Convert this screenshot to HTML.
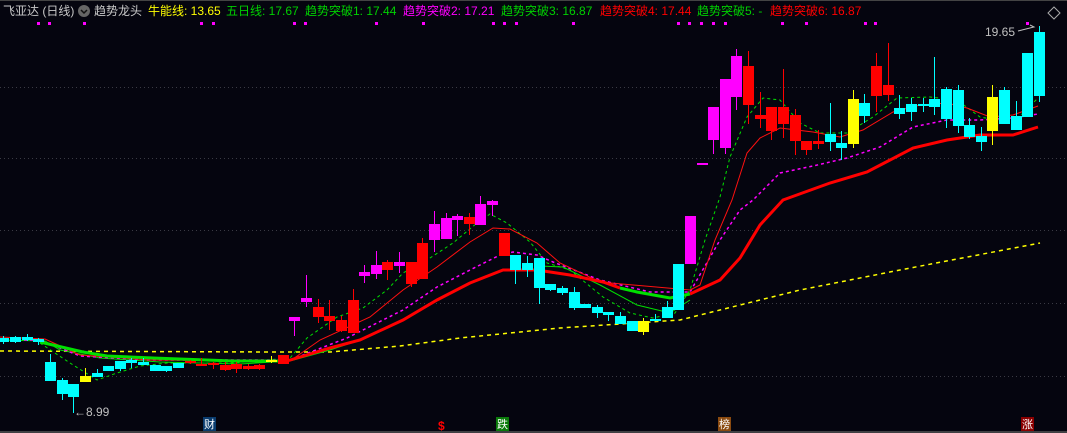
<!DOCTYPE html>
<html><head><meta charset="utf-8">
<style>
html,body{margin:0;padding:0;background:#05050f;}
#w{position:relative;width:1067px;height:433px;overflow:hidden;background:#05050f;font-family:"Liberation Sans","Noto Sans CJK SC",sans-serif;}
.h{position:absolute;top:3px;font-size:12px;white-space:nowrap;line-height:16px}
.ic{position:absolute;top:417px;width:13px;height:14px;font-size:11px;line-height:14px;text-align:center;color:#fff;font-family:"Noto Sans CJK SC",sans-serif}
</style></head><body>
<div id="w">
<svg id="s" width="1067" height="433" style="position:absolute;left:0;top:0">
<g stroke="#3a3a44" stroke-width="1" stroke-dasharray="1,3">
<line x1="0" y1="87.5" x2="1067" y2="87.5"/><line x1="0" y1="158.5" x2="1067" y2="158.5"/>
<line x1="0" y1="230.5" x2="1067" y2="230.5"/><line x1="0" y1="303.5" x2="1067" y2="303.5"/>
<line x1="0" y1="376.5" x2="1067" y2="376.5"/>
</g>
<line x1="0" y1="0.5" x2="1067" y2="0.5" stroke="#444"/>
<line x1="0" y1="432" x2="1067" y2="432" stroke="#555" stroke-width="1.5"/>
<polyline fill="none" stroke="#ffff00" stroke-width="1.5" stroke-dasharray="4,4" points="0,351 270,352 330,352 400,346 460,338 560,328 680,320 720,310 800,290 900,270 1040,243"/>
<polyline fill="none" stroke="#00e000" stroke-width="1" points="0,340 45,341 60,350 100,358 160,362 240,364 290,361 330,350 360,340"/>
<polyline fill="none" stroke="#00e000" stroke-width="1" points="540,266 563,267 600,285 637,305 670,313 690,300"/>
<polyline fill="none" stroke="#00e000" stroke-width="1" stroke-dasharray="3,3" points="40,343 70,363 97,380 117,373 140,366 167,363 233,363 290,358 307,338 337,317 363,308 387,290 403,273 430,258 453,243 477,223 490,214 507,223 530,242 547,263 570,270 603,297 630,313 653,318 675,313 690,290 705,240 720,197 730,157 747,117 763,98 780,100 800,123 820,133 847,133 873,117 897,98 930,97 957,100 980,117 1013,123 1038,98"/>
<polyline fill="none" stroke="#ff00ff" stroke-width="1.5" stroke-dasharray="3,3" points="0,340 40,340 80,356 150,360 290,360 347,338 403,310 437,287 470,270 500,255 513,252 537,255 553,262 600,280 650,292 690,292 720,240 740,210 753,200 780,173 813,166 847,158 880,147 913,127 947,120 980,120 1013,118 1038,114"/>
<polyline fill="none" stroke="#ff1010" stroke-width="1" points="0,337 45,339 80,355 150,360 290,361 320,340 370,317 403,290 437,267 470,242 493,228 510,229 537,243 560,263 600,282 690,290 700,285 715,240 732,200 747,153 760,138 780,128 813,132 840,137 863,130 893,112 920,105 947,103 967,108 990,117 1013,115 1038,106"/>
<polyline fill="none" stroke="#00e000" stroke-width="3" points="40,342 83,352 107,356 153,358 233,361 287,361"/>
<polyline fill="none" stroke="#ff0000" stroke-width="3" points="287,361 330,348 360,340 403,320 437,300 470,283 503,270 537,270 570,275 603,282 620,288"/>
<polyline fill="none" stroke="#00e000" stroke-width="3" points="620,288 637,292 670,298 690,294"/>
<polyline fill="none" stroke="#ff0000" stroke-width="3" points="690,294 720,280 740,258 760,225 783,200 830,183 867,172 913,148 947,140 980,135 1013,135 1038,127"/>
<g id="c"></g>
<g fill="#ff00ff" id="d"></g>
<text x="985" y="36" fill="#c0c0c0" font-size="12" font-family="Liberation Sans">19.65</text>
<polyline fill="none" stroke="#c0c0c0" points="1018,31 1034,27 1030,25"/>
<text x="74" y="416" fill="#c0c0c0" font-size="12" font-family="Liberation Sans">←8.99</text>
<path d="M1054 7 L1060 13 L1054 19 L1048 13 Z" fill="none" stroke="#aaa"/>
<circle cx="84" cy="11" r="6" fill="#666"/>
<polyline points="81,10 84,13 87,10" fill="none" stroke="#111" stroke-width="1.5"/>
<text x="438" y="430" fill="#ff0000" font-size="12" font-weight="bold" font-family="Liberation Sans">$</text>
</svg>
<div class="h" style="left:3px;color:#c8c8c8">飞亚达 (日线)</div>
<div class="h" style="left:94px;color:#c8c8c8">趋势龙头</div>
<div class="h" style="left:148px;color:#ffff00">牛能线: 13.65</div>
<div class="h" style="left:226px;color:#00d000">五日线: 17.67</div>
<div class="h" style="left:305px;color:#00d000">趋势突破1: 17.44</div>
<div class="h" style="left:403px;color:#ff00ff">趋势突破2: 17.21</div>
<div class="h" style="left:501px;color:#00d000">趋势突破3: 16.87</div>
<div class="h" style="left:600px;color:#ff0000">趋势突破4: 17.44</div>
<div class="h" style="left:697px;color:#00d000">趋势突破5: -</div>
<div class="h" style="left:770px;color:#ff0000">趋势突破6: 16.87</div>
<div class="ic" style="left:203px;background:#0a3c6e">财</div>
<div class="ic" style="left:496px;background:#0a7a0a">跌</div>
<div class="ic" style="left:718px;background:#8a4a10">榜</div>
<div class="ic" style="left:1021px;background:#8b0000">涨</div>
</div>
<script>
var C={c:"#00ffff",r:"#ff0000",m:"#ff00ff",y:"#ffff00"};
var D=[
[0,338,342,336,344,"c"],[1,337,342,336,343,"c"],[2,337,340,334,341,"c"],[3,339,342,338,345,"c"],
[4,362,381,354,381,"c"],[5,380,394,378,400,"c"],[6,384,397,384,413,"c"],[7,376,382,368,382,"y"],
[8,373,377,369,377,"c"],[9,366,371,366,371,"c"],[10,361,369,361,371,"c"],[11,360,363,358,368,"c"],
[12,362,365,358,365,"c"],[13,365,371,365,371,"c"],[14,366,371,366,372,"c"],[15,363,368,363,368,"c"],
[16,361,363,360,364,"r"],[17,364,366,358,366,"r"],[18,363,365,362,369,"r"],[19,365,370,362,371,"r"],
[20,364,369,362,373,"r"],[21,366,369,364,370,"r"],[22,365,369,364,370,"r"],[23,360,362,356,363,"y"],
[24,355,364,355,364,"r"],[25,317,321,317,336,"m"],[26,298,302,275,307,"m"],[27,307,317,299,323,"r"],
[28,316,321,300,330,"r"],[29,320,331,316,332,"r"],[30,300,333,289,333,"r"],[31,272,276,265,283,"m"],
[32,265,274,251,279,"m"],[33,262,270,260,280,"r"],[34,262,266,252,273,"m"],[35,262,284,262,287,"r"],
[36,243,279,238,279,"r"],[37,224,240,211,252,"m"],[38,218,239,213,239,"m"],[39,216,220,214,236,"m"],
[40,217,224,213,235,"r"],[41,204,225,196,225,"m"],[42,201,205,200,216,"m"],[43,233,256,233,256,"r"],
[44,255,270,255,284,"c"],[45,263,270,256,277,"c"],[46,258,288,258,304,"c"],[47,284,290,284,291,"c"],
[48,288,293,286,295,"c"],[49,292,308,287,310,"c"],[50,304,308,304,308,"c"],[51,307,313,305,318,"c"],
[52,312,315,312,321,"c"],[53,316,324,312,324,"c"],[54,321,331,321,331,"c"],[55,321,332,318,335,"y"],
[56,319,321,314,321,"c"],[57,307,318,301,318,"c"],[58,264,310,264,310,"c"],[59,216,264,216,264,"m"],
[60,163,165,163,165,"m"],[61,107,140,107,154,"m"],[62,79,148,79,154,"m"],[63,56,97,49,110,"m"],
[64,66,105,51,124,"r"],[65,115,119,92,128,"r"],[66,107,131,107,140,"r"],[67,107,124,69,138,"r"],
[68,115,141,109,155,"r"],[69,141,150,141,155,"r"],[70,141,144,130,149,"r"],[71,134,142,103,151,"c"],
[72,143,148,131,160,"c"],[73,99,144,90,148,"y"],[74,103,116,94,123,"c"],[75,66,96,53,112,"r"],
[76,85,95,43,101,"r"],[77,108,114,95,119,"c"],[78,104,112,98,121,"c"],[79,104,106,98,112,"c"],
[80,99,107,57,115,"c"],[81,89,119,87,128,"c"],[82,90,126,85,133,"c"],[83,125,137,118,139,"c"],
[84,136,142,127,151,"c"],[85,97,131,85,145,"y"],[86,90,124,87,124,"c"],[87,116,130,101,130,"c"],
[88,53,117,53,117,"c"],[89,32,96,26,102,"c"]];
var g=document.getElementById("c"),s="";
D.forEach(function(a){var cx=3.96+a[0]*11.635,col=C[a[5]],x=Math.round(cx-5.5);
s+='<line x1="'+(x+5.5)+'" x2="'+(x+5.5)+'" y1="'+a[3]+'" y2="'+a[4]+'" stroke="'+col+'"/>';
s+='<rect x="'+x+'" y="'+a[1]+'" width="11" height="'+Math.max(2,a[2]-a[1])+'" fill="'+col+'"/>';});
g.innerHTML=s;
var dx=[38,49,84,201,213,294,305,376,423,493,504,516,573,678,689,701,713,725,782,806,865,875,1027],t="";
dx.forEach(function(x){t+='<rect x="'+(x-1)+'" y="22" width="3" height="3"/>';});
document.getElementById("d").innerHTML=t;
</script>
</body></html>
